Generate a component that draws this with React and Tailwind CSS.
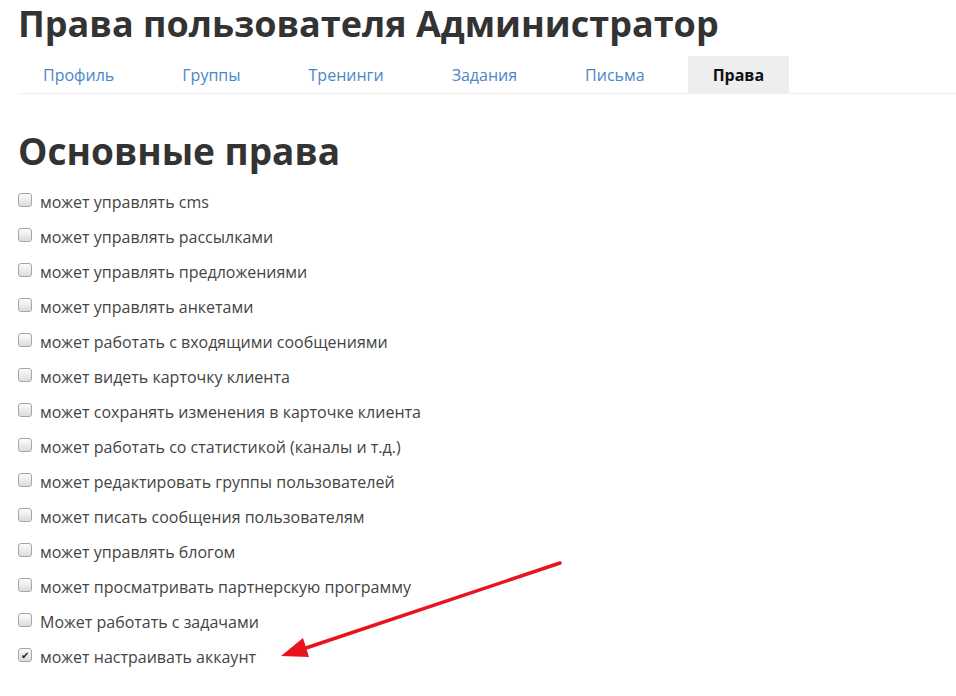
const tabs = ['Профиль', 'Группы', 'Тренинги', 'Задания', 'Письма', 'Права']

const perms = [
  ['может управлять cms', false],
  ['может управлять рассылками', false],
  ['может управлять предложениями', false],
  ['может управлять анкетами', false],
  ['может работать с входящими сообщениями', false],
  ['может видеть карточку клиента', false],
  ['может сохранять изменения в карточке клиента', false],
  ['может работать со статистикой (каналы и т.д.)', false],
  ['может редактировать группы пользователей', false],
  ['может писать сообщения пользователям', false],
  ['может управлять блогом', false],
  ['может просматривать партнерскую программу', false],
  ['Может работать с задачами', false],
  ['может настраивать аккаунт', true],
]

const Box = ({ checked }) => (
  <span className="w-[14px] h-[14px] shrink-0 -mt-[3px] rounded-[3px] border border-[#a6a6a6] bg-gradient-to-b from-[#fcfcfc] to-[#dcdcdc] flex items-center justify-center text-[10px] leading-none text-[#222]">
    {checked ? '✔' : null}
  </span>
)

export default function App() {
  return (
    <div className="relative w-[956px] h-[696px] bg-white overflow-hidden pl-[18px] font-['Open_Sans',sans-serif]">
      <h1 className="text-[36px] leading-[50px] -mt-[1px] font-bold text-[#333] whitespace-nowrap">
        Права пользователя Администратор
      </h1>
      <div className="mt-[7px] flex gap-[18px] border-b border-[#eee]">
        {tabs.map((t) => (
          <div
            key={t}
            className={
              t === 'Права'
                ? 'px-[25px] h-[37px] flex items-center bg-[#eee] text-[#111] font-bold text-[16px]'
                : 'px-[25px] h-[37px] flex items-center text-[#4a86c8] text-[16px]'
            }
          >
            {t}
          </div>
        ))}
      </div>
      <h2 className="mt-[32px] text-[37px] leading-[50px] font-bold text-[#333]">Основные права</h2>
      <div className="mt-[8px] flex flex-col">
        {perms.map(([label, checked]) => (
          <label key={label} className="h-[35px] flex items-center gap-[8px] text-[16px] text-[#444]">
            <Box checked={checked} />
            <span>{label}</span>
          </label>
        ))}
      </div>
      <svg className="absolute left-0 top-0 pointer-events-none" width="956" height="696">
        <line x1="560" y1="563" x2="300" y2="650" stroke="#e8141b" strokeWidth="3.5" strokeLinecap="round" />
        <polygon points="281,656 303,638 309,657" fill="#e8141b" />
      </svg>
    </div>
  )
}
